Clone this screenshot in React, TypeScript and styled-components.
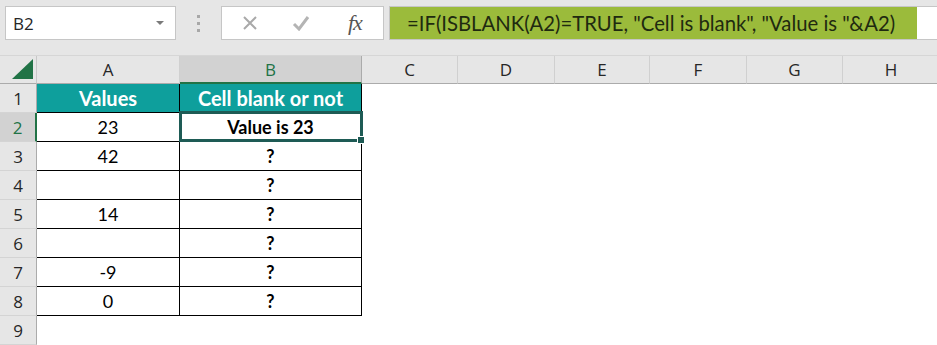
import React from 'react';
import styled, { createGlobalStyle, css } from 'styled-components';

const GlobalStyle = createGlobalStyle`
  html, body {
    margin: 0;
    padding: 0;
    background: #ffffff;
  }
  body {
    font-family: "Lato", "Liberation Sans", sans-serif;
  }
`;

const COLS = ['A', 'B', 'C', 'D', 'E', 'F', 'G', 'H'];
const COL_WIDTHS = [37, 143, 182, 96, 97, 95, 97, 96, 97];

const TABLE = [
  ['Values', 'Cell blank or not'],
  ['23', 'Value is 23'],
  ['42', '?'],
  ['', '?'],
  ['14', '?'],
  ['', '?'],
  ['-9', '?'],
  ['0', '?'],
];

const Window = styled.div`
  width: 937px;
  height: 345px;
  overflow: hidden;
  background: #ffffff;
`;

const Toolbar = styled.div`
  display: flex;
  align-items: flex-start;
  height: 56px;
  box-sizing: border-box;
  padding: 6px 0 0 5px;
  background: #e6e6e6;
  border-bottom: 1px solid #d6d6d6;
`;

const NameBox = styled.div`
  width: 171px;
  height: 34px;
  box-sizing: border-box;
  border: 1px solid #c6c6c6;
  background: #ffffff;
  display: flex;
  align-items: center;
  justify-content: space-between;
  padding: 0 11px 0 7px;
  font-family: "Open Sans", sans-serif;
  font-size: 17px;
  color: #262626;
`;

const DropArrow = styled.span`
  width: 0;
  height: 0;
  border-left: 4px solid transparent;
  border-right: 4px solid transparent;
  border-top: 4px solid #7a7a7a;
`;

const Grip = styled.div`
  width: 45px;
  height: 34px;
  display: flex;
  flex-direction: column;
  align-items: center;
  justify-content: center;
  gap: 4px;
`;

const GripDot = styled.span`
  width: 3px;
  height: 3px;
  background: #a8a8a8;
`;

const FxBox = styled.div`
  width: 163px;
  height: 34px;
  box-sizing: border-box;
  border: 1px solid #c6c6c6;
  background: #ffffff;
  display: flex;
  align-items: center;
  padding-left: 20px;
  gap: 34px;
`;

const FxLabel = styled.span`
  font-family: "Liberation Serif", serif;
  font-style: italic;
  font-size: 22px;
  color: #555555;
  margin-left: 4px;
  letter-spacing: -1px;
`;

const FormulaInput = styled.div`
  flex: 1;
  margin-left: 5px;
  height: 34px;
  box-sizing: border-box;
  border: 1px solid #c6c6c6;
  border-right: none;
  background: #ffffff;
  display: flex;
`;

const FormulaText = styled.div`
  width: 527px;
  background: #9bbb3b;
  display: flex;
  align-items: center;
  padding-left: 17px;
  box-sizing: border-box;
  font-size: 20.3px;
  color: #1f2a10;
  white-space: pre;
`;

const Sheet = styled.div`
  display: grid;
  grid-template-columns: ${COL_WIDTHS.map((w) => `${w}px`).join(' ')};
  grid-template-rows: 28px repeat(9, 29px);
  background: #ffffff;
`;

const Corner = styled.div`
  background: #e6e6e6;
  border-right: 1px solid #c8c8c8;
  border-bottom: 1px solid #ababab;
  box-sizing: border-box;
  display: flex;
  align-items: flex-end;
  justify-content: flex-end;
  padding: 0 3px 4px 0;
`;

const CornerMark = styled.span`
  width: 0;
  height: 0;
  border-left: 21px solid transparent;
  border-bottom: 20px solid #217346;
`;

const ColHeader = styled.div<{ $selected?: boolean }>`
  box-sizing: border-box;
  display: flex;
  align-items: center;
  justify-content: center;
  font-family: "Open Sans", sans-serif;
  font-size: 17px;
  background: #e6e6e6;
  color: #262626;
  border-right: 1px solid #d0d0d0;
  border-bottom: 1px solid #ababab;
  ${(p) =>
    p.$selected &&
    css`
      background: #d2d2d2;
      color: #217346;
      border-right-color: #ababab;
      border-bottom: 2px solid #217346;
    `}
`;

const RowHeader = styled.div<{ $selected?: boolean }>`
  box-sizing: border-box;
  display: flex;
  align-items: center;
  justify-content: center;
  font-family: "Open Sans", sans-serif;
  font-size: 17px;
  background: #e6e6e6;
  color: #262626;
  border-right: 1px solid #ababab;
  border-bottom: 1px solid #d4d4d4;
  ${(p) =>
    p.$selected &&
    css`
      background: #d2d2d2;
      color: #217346;
      border-right: 2px solid #217346;
    `}
`;

const Cell = styled.div<{ $kind: 'title' | 'data' | 'blank'; $bold?: boolean; $selected?: boolean }>`
  box-sizing: border-box;
  position: relative;
  display: flex;
  align-items: center;
  justify-content: center;
  font-size: 18px;
  color: #000000;
  font-weight: ${(p) => (p.$bold ? 700 : 400)};
  ${(p) =>
    p.$kind !== 'blank' &&
    css`
      border-right: 1px solid #000000;
      border-bottom: 1px solid #000000;
    `}
  ${(p) =>
    p.$kind === 'title' &&
    css`
      background: #0e9f9c;
      color: #ffffff;
      font-weight: 700;
      font-size: 20px;
    `}
  ${(p) =>
    p.$selected &&
    css`
      &::after {
        content: '';
        position: absolute;
        inset: -2px -2px -1px -1px;
        border: 3px solid #1e5b55;
      }
      &::before {
        content: '';
        position: absolute;
        right: -4px;
        bottom: -3px;
        width: 6px;
        height: 6px;
        background: #1e5b55;
        border: 1px solid #ffffff;
        z-index: 1;
      }
    `}
`;

const CrossIcon = () => (
  <svg width="16" height="16" viewBox="0 0 16 16">
    <path d="M2 2 L14 14 M14 2 L2 14" stroke="#a9a9a9" strokeWidth="2" fill="none" />
  </svg>
);

const CheckIcon = () => (
  <svg width="18" height="16" viewBox="0 0 18 16">
    <path d="M2 9 L7 14 L16 2" stroke="#b4b4b4" strokeWidth="3" fill="none" />
  </svg>
);

const App = () => {
  return (
    <Window>
      <GlobalStyle />
      <Toolbar>
        <NameBox>
          B2
          <DropArrow />
        </NameBox>
        <Grip>
          <GripDot />
          <GripDot />
          <GripDot />
        </Grip>
        <FxBox>
          <CrossIcon />
          <CheckIcon />
          <FxLabel>fx</FxLabel>
        </FxBox>
        <FormulaInput>
          <FormulaText>=IF(ISBLANK(A2)=TRUE, "Cell is blank", "Value is "&amp;A2)</FormulaText>
        </FormulaInput>
      </Toolbar>
      <Sheet>
        <Corner>
          <CornerMark />
        </Corner>
        {COLS.map((c) => (
          <ColHeader key={c} $selected={c === 'B'}>
            {c}
          </ColHeader>
        ))}
        {Array.from({ length: 9 }, (_, r) => (
          <React.Fragment key={r}>
            <RowHeader $selected={r === 1}>{r + 1}</RowHeader>
            {COLS.map((c, ci) => {
              const row = TABLE[r];
              if (!row || ci > 1) return <Cell key={c} $kind="blank" />;
              return (
                <Cell
                  key={c}
                  $kind={r === 0 ? 'title' : 'data'}
                  $bold={ci === 1}
                  $selected={r === 1 && ci === 1}
                >
                  {row[ci]}
                </Cell>
              );
            })}
          </React.Fragment>
        ))}
      </Sheet>
    </Window>
  );
};

export default App;
